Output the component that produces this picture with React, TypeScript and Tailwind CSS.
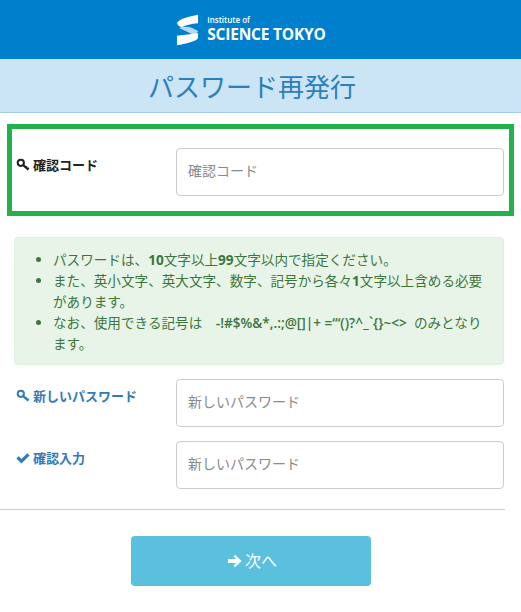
const jp = "font-['Open_Sans','Noto_Sans_CJK_JP',sans-serif]";

function KeyIcon({ className }: { className?: string }) {
  return (
    <svg viewBox="0 0 14 14" width="14" height="14" className={className} fill="none" stroke="currentColor">
      <circle cx="4.8" cy="4.8" r="3.1" strokeWidth="2" />
      <path d="M7.2 7.2 12.4 11.6" strokeWidth="2.2" />
      <path d="M9.8 9.6 11 8.4M11.6 11 12.8 9.8" strokeWidth="1.4" />
    </svg>
  );
}

function CheckIcon({ className }: { className?: string }) {
  return (
    <svg viewBox="0 0 14 14" width="14" height="14" className={className} fill="currentColor">
      <path d="M0.4 7.4 2.6 5.2 5.4 8 11.4 2.2 13.6 4.4 5.4 12.4z" />
    </svg>
  );
}

function Field({ label, icon, placeholder, color }: { label: string; icon: React.ReactNode; placeholder: string; color: string }) {
  return (
    <div className="flex items-start">
      <label className={`w-[162px] shrink-0 pl-[2px] pt-[7px] flex items-center gap-[3px] text-[13px] font-bold leading-[20px] ${color}`}>
        {icon}
        <span>{label}</span>
      </label>
      <input
        readOnly
        placeholder={placeholder}
        className="w-[328px] h-[48px] bg-white border border-[#ccc] rounded-[4px] px-[11px] pb-[4px] text-[14px] placeholder:text-[#8a8a8a] outline-none"
      />
    </div>
  );
}

export default function App() {
  return (
    <div className={`w-[521px] h-[612px] bg-white overflow-hidden ${jp}`}>
      <header className="h-[59px] bg-[#0080cc] flex items-center justify-center pr-[19px]">
        <div className="flex items-center gap-[8px]">
          <svg viewBox="0 0 24 32" width="23" height="32" fill="#fff">
            <path d="M1 9 Q2 4 23 0 L23 9 Q12 10 6 13 Q2 12 1 9z" />
            <path d="M3 14 Q10 11 17 14 L23 17 Q22 20 18 21 Q10 17 3 14z" fill="#b5d9f0" />
            <path d="M1 22 Q8 21 23 19 L23 24 Q22 28 1 32z" />
          </svg>
          <div className="text-white leading-none font-['Open_Sans',sans-serif]">
            <div className="text-[8px] font-semibold mb-[3px]">Institute of</div>
            <div className="text-[15.5px] font-bold tracking-[-0.2px] whitespace-nowrap">SCIENCE TOKYO</div>
          </div>
        </div>
      </header>

      <div className="h-[54px] bg-[#cce5f5] border-b border-[#9fcdea] flex items-center justify-center pr-[17px] pt-[2px]">
        <h1 className="text-[26px] text-[#2a80bd] leading-none">パスワード再発行</h1>
      </div>

      <div className="px-[7px] pt-[11px]">
        <div className="h-[92px] border-[5px] border-[#22b14c] pl-[2px] pt-[19px]">
          <Field label="確認コード" icon={<KeyIcon />} placeholder="確認コード" color="text-[#222]" />
        </div>
      </div>

      <div className="ml-[14px] w-[490px] mt-[21px] h-[128px] bg-[#e8f4e8] rounded-[4px] border border-[#e0efe0] pl-[38px] pr-[14px] pt-[11px] text-[13.6px] leading-[21px] text-[#3c763d]">
        <ul className="list-disc">
          <li>パスワードは、<b>10</b>文字以上<b>99</b>文字以内で指定ください。</li>
          <li>また、英小文字、英大文字、数字、記号から各々<b>1</b>文字以上含める必要があります。</li>
          <li>なお、使用できる記号は　<span className="font-semibold">-!#$%&amp;*,.:;@[]|+ =‘“()?^_`{"{}"}~&lt;&gt;</span>&nbsp;&nbsp;のみとなります。</li>
        </ul>
      </div>

      <div className="pl-[14px] pt-[14px] flex flex-col gap-[14px]">
        <Field label="新しいパスワード" icon={<KeyIcon />} placeholder="新しいパスワード" color="text-[#337ab7]" />
        <Field label="確認入力" icon={<CheckIcon />} placeholder="新しいパスワード" color="text-[#337ab7]" />
      </div>

      <hr className="w-[505px] mt-[20px] border-t border-[#ccc]" />

      <div className="flex justify-center pt-[26px] pr-[19px]">
        <button className="w-[240px] h-[50px] bg-[#5bc0de] rounded-[4px] text-white text-[16px] flex items-center justify-center gap-[2px] pl-[2px]">
          <svg viewBox="0 0 16 16" width="16" height="16" fill="currentColor">
            <path d="M8 1.8 14.6 8 8 14.2 6.4 12.6 9.2 10H1V6h8.2L6.4 3.4z" />
          </svg>
          次へ
        </button>
      </div>
    </div>
  );
}
